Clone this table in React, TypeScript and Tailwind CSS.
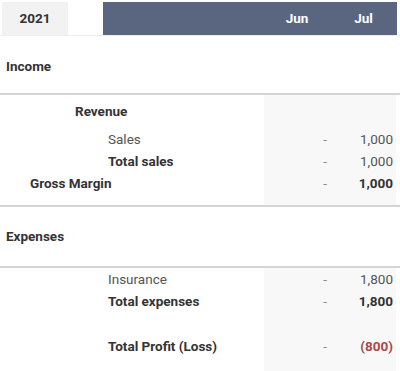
import React from 'react';

type Line = {
  label: string;
  indent: string;
  bold?: boolean;
  jun?: string;
  jul?: string;
  red?: boolean;
  h: string;
  strongValue?: boolean;
};

function Row({ label, indent, bold, jun, jul, red, h, strongValue }: Line) {
  return (
    <div className={`grid grid-cols-[264px_66px_66px_4px] ${h}`}>
      <div className={`flex items-center ${indent} ${bold ? 'font-bold text-[#333]' : 'text-[#555]'}`}>
        {label}
      </div>
      <div className="flex items-center justify-end pr-[3px] bg-[#f8f8f8] text-[#888]">{jun}</div>
      <div
        className={`flex items-center justify-end pr-[3px] bg-[#f8f8f8] ${
          red ? 'text-[#a84a4a] font-bold' : strongValue ? 'font-bold text-[#333]' : 'text-[#555]'
        }`}
      >
        {jul}
      </div>
      <div />
    </div>
  );
}

function Spacer({ h }: { h: string }) {
  return (
    <div className={`grid grid-cols-[264px_132px_4px] ${h}`}>
      <div />
      <div className="bg-[#f8f8f8]" />
      <div />
    </div>
  );
}

export default function App() {
  return (
    <div className="w-[400px] h-[371px] overflow-hidden bg-white text-[13.5px] font-['Roboto',_'Liberation_Sans',_sans-serif]">
      <div className="flex pt-[2px] h-[36px] border-b border-[#eeeeee]">
        <div className="ml-[2px] w-[66px] flex items-center justify-center bg-[#f2f2f2] font-bold text-[#333]">
          2021
        </div>
        <div className="ml-[35px] w-[294px] grid grid-cols-[161px_66px_67px] bg-[#5a6680] text-white font-bold">
          <div />
          <div className="flex items-center justify-center">Jun</div>
          <div className="flex items-center justify-center">Jul</div>
        </div>
      </div>

      <div className="h-[59px] pt-[4px] flex items-center pl-[6px] font-bold text-[#333] border-b-2 border-[#d4d4d4]">
        Income
      </div>

      <Row label="Revenue" indent="pl-[75px]" bold h="h-[32px]" />
      <Row label="Sales" indent="pl-[108px]" jun="-" jul="1,000" h="h-[24px]" />
      <Row label="Total sales" indent="pl-[108px]" bold jun="-" jul="1,000" h="h-[20px]" />
      <Row label="Gross Margin" indent="pl-[30px]" bold jun="-" jul="1,000" strongValue h="h-[24px]" />
      <Spacer h="h-[10px]" />

      <div className="h-[63px] flex items-center pl-[6px] font-bold text-[#333] border-y-2 border-[#d4d4d4]">
        Expenses
      </div>

      <Row label="Insurance" indent="pl-[108px]" jun="-" jul="1,800" h="h-[23px]" />
      <Row label="Total expenses" indent="pl-[108px]" bold jun="-" jul="1,800" strongValue h="h-[21px]" />
      <Spacer h="h-[23px]" />
      <Row label="Total Profit (Loss)" indent="pl-[108px]" bold jun="-" jul="(800)" red h="h-[22px]" />
      <Spacer h="h-[20px]" />
    </div>
  );
}
